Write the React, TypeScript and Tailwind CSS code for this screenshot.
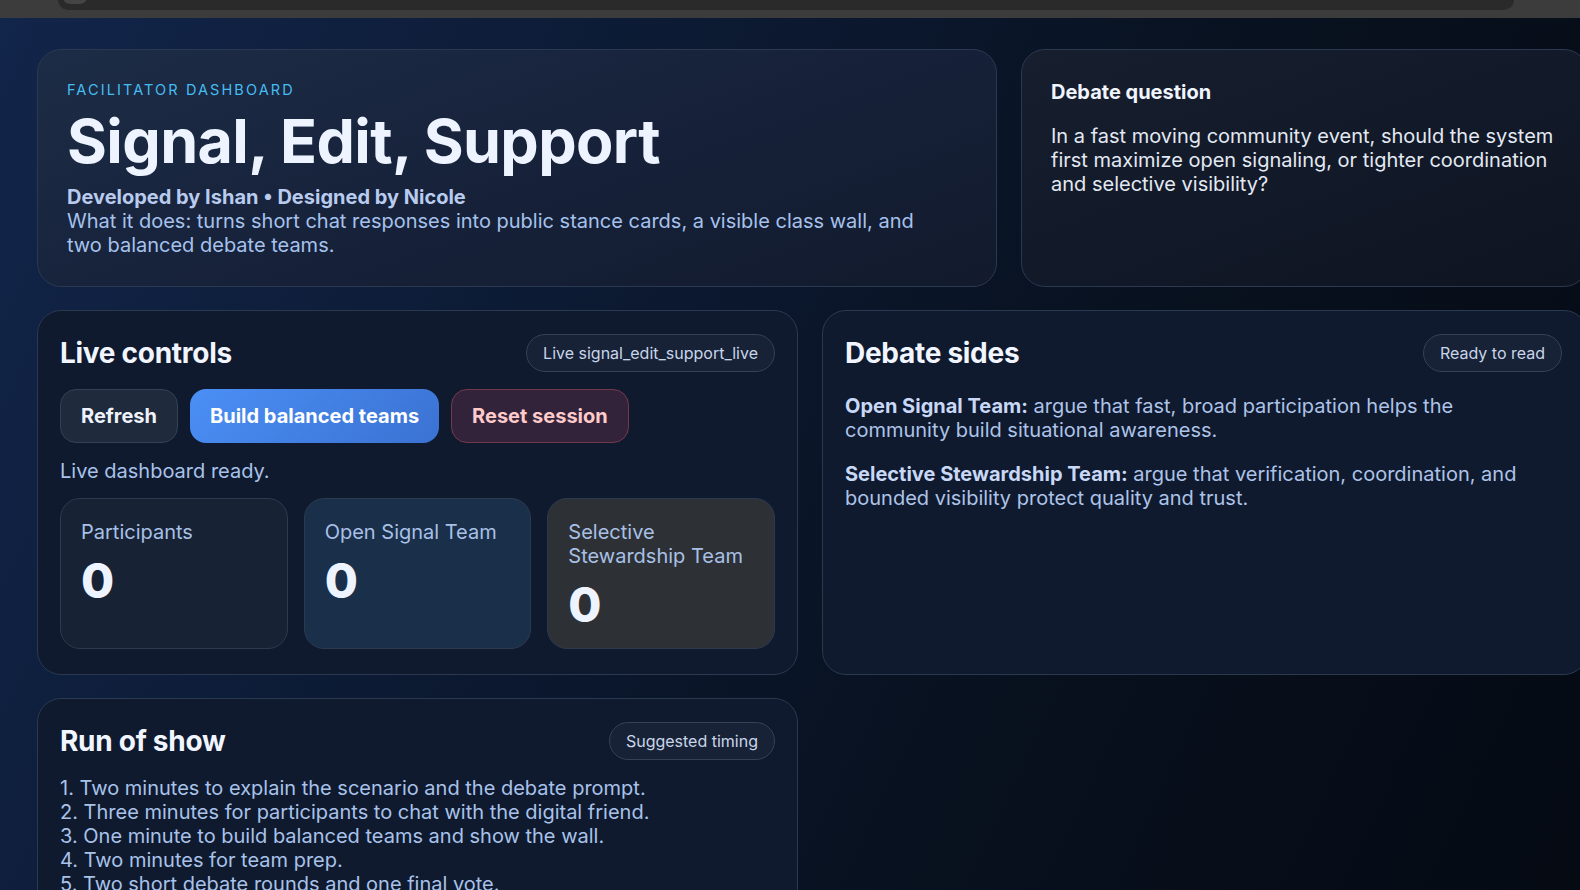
import type { ReactNode } from 'react'

const card = 'rounded-[24px] border border-[#2a3850]'

function Pill({ children }: { children: ReactNode }) {
  return (
    <span className="h-[38px] px-4 rounded-full border border-[#334258] bg-[#172236] text-[16px] text-[#c9d5ea] flex items-center whitespace-nowrap">
      {children}
    </span>
  )
}

function PanelHead({ title, pill }: { title: string; pill: string }) {
  return (
    <div className="flex items-center justify-between h-[38px]">
      <h2 className="text-[28px] font-bold tracking-[-0.01em] text-[#f1f5ff]">{title}</h2>
      <Pill>{pill}</Pill>
    </div>
  )
}

function Stat({ label, tone }: { label: ReactNode; tone: string }) {
  return (
    <div className={`rounded-[20px] border border-[#2c3a50] px-5 pt-[21px] h-[151px] ${tone}`}>
      <div className="text-[20px] leading-6 text-[#a9c0e6]">{label}</div>
      <div className="text-[48px] font-extrabold leading-none mt-[13px] text-[#eef4ff]">0</div>
    </div>
  )
}

const steps = [
  'Two minutes to explain the scenario and the debate prompt.',
  'Three minutes for participants to chat with the digital friend.',
  'One minute to build balanced teams and show the wall.',
  'Two minutes for team prep.',
  'Two short debate rounds and one final vote.',
]

export default function App() {
  return (
    <div className="h-[890px] overflow-hidden bg-[#0a1528] font-['Inter','Noto_Sans',sans-serif]">
      {/* window chrome strip */}
      <div className="h-[18px] bg-[#3c3c3c] relative">
        <div className="absolute left-[58px] right-[66px] top-0 h-[10px] rounded-b-[10px] bg-[#2a2a2a]" />
        <div className="absolute left-[63px] top-[-10px] w-[24px] h-[14px] rounded-full bg-[#444444]" />
      </div>

      <div className="h-[872px] bg-[linear-gradient(115deg,#12254a_0%,#0c1a33_35%,#08111f_65%,#050a13_100%)] pl-[37px] pt-[31px]">
        <div className="w-[1551px] flex flex-col gap-[23px]">
          <div className="grid grid-cols-[960px_1fr] gap-6">
            <section className={`${card} h-[238px] bg-[linear-gradient(160deg,#1d2c46_0%,#162139_55%,#121a2c_100%)] pl-[29px] pt-[32px]`}>
              <div className="text-[14.5px] leading-4 tracking-[0.145em] text-[#46bdf2]">FACILITATOR DASHBOARD</div>
              <h1 className="text-[61px] font-bold leading-[72px] tracking-[-0.01em] text-[#eef4ff] mt-[7px]">
                Signal, Edit, Support
              </h1>
              <div className="text-[20px] font-bold leading-6 text-[#b9cbee] mt-[8px]">
                Developed by Ishan • Designed by Nicole
              </div>
              <p className="text-[20px] leading-6 text-[#a6c2ec] w-[870px]">
                What it does: turns short chat responses into public stance cards, a visible class wall, and two balanced
                debate teams.
              </p>
            </section>
            <section className={`${card} h-[238px] bg-[linear-gradient(160deg,#171f2e_0%,#111827_60%,#0e1420_100%)] pl-[29px] pr-8 pt-[30px]`}>
              <h3 className="text-[20px] font-bold leading-6 text-[#f1f5ff]">Debate question</h3>
              <p className="text-[20px] leading-6 text-[#e3e9f3] mt-5">
                In a fast moving community event, should the system first maximize open signaling, or tighter coordination
                and selective visibility?
              </p>
            </section>
          </div>

          <div className="grid grid-cols-[761px_1fr] gap-6">
            <section className={`${card} h-[365px] bg-[#0f1a2e] px-[22px] pt-[23px]`}>
              <PanelHead title="Live controls" pill="Live signal_edit_support_live" />
              <div className="flex gap-3 mt-[17px]">
                <button className="h-[54px] px-5 rounded-[16px] border border-[#334155] bg-[#1f2a3c] text-[20px] font-bold text-[#eef2fa]">
                  Refresh
                </button>
                <button className="h-[54px] px-5 rounded-[16px] bg-[linear-gradient(135deg,#4b8ff5,#3a72d2)] text-[20px] font-bold text-white">
                  Build balanced teams
                </button>
                <button className="h-[54px] px-5 rounded-[16px] border border-[#75384a] bg-[#33233a] text-[20px] font-bold text-[#fecaca]">
                  Reset session
                </button>
              </div>
              <p className="text-[20px] leading-6 text-[#a9c2ea] mt-[16px]">Live dashboard ready.</p>
              <div className="grid grid-cols-3 gap-4 mt-[15px]">
                <Stat label="Participants" tone="bg-[#172235]" />
                <Stat label="Open Signal Team" tone="bg-[#1a2f4a]" />
                <Stat
                  label={
                    <>
                      Selective
                      <br />
                      Stewardship Team
                    </>
                  }
                  tone="bg-[#2d3135]"
                />
              </div>
            </section>

            <section className={`${card} h-[365px] bg-[#0f1a2e] pl-[22px] pr-[25px] pt-[23px]`}>
              <PanelHead title="Debate sides" pill="Ready to read" />
              <p className="text-[20px] leading-6 text-[#aec3e8] mt-[22px] w-[680px]">
                <b className="font-bold text-[#c8d8f6]">Open Signal Team:</b>
                {' argue that fast, broad participation helps the community build situational awareness.'}
              </p>
              <p className="text-[20px] leading-6 text-[#aec3e8] mt-5 w-[680px]">
                <b className="font-bold text-[#c8d8f6]">Selective Stewardship Team:</b>
                {' argue that verification, coordination, and bounded visibility protect quality and trust.'}
              </p>
            </section>
          </div>

          <div className="grid grid-cols-[761px_1fr] gap-6">
            <section className={`${card} h-[260px] bg-[#0f1a2e] px-[22px] pt-[23px]`}>
              <PanelHead title="Run of show" pill="Suggested timing" />
              <ol className="mt-[16px] text-[20px] leading-6 text-[#a9c2ea]">
                {steps.map((s, i) => (
                  <li key={i}>
                    {i + 1}. {s}
                  </li>
                ))}
              </ol>
            </section>
          </div>
        </div>
      </div>
    </div>
  )
}
